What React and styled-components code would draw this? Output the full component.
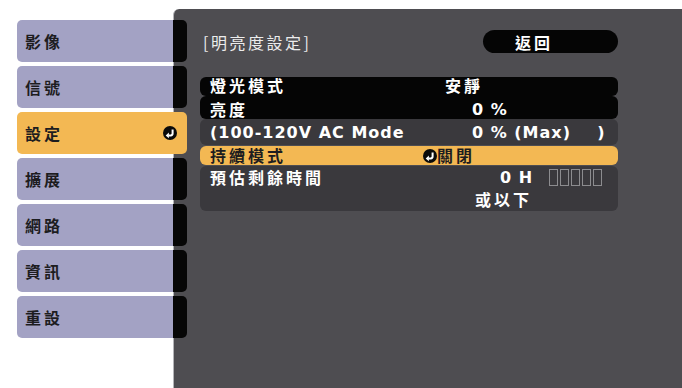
import React from "react";
import styled, { createGlobalStyle } from "styled-components";

const GlobalStyle = createGlobalStyle`
  html, body {
    margin: 0;
    padding: 0;
    background: #ffffff;
  }
  body {
    font-family: "Liberation Sans", "Noto Sans CJK TC", sans-serif;
  }
`;

const Screen = styled.div`
  display: flex;
  width: 682px;
  height: 388px;
  overflow: hidden;
  background: #ffffff;
`;

const Menu = styled.nav`
  position: relative;
  z-index: 1;
  display: flex;
  flex-direction: column;
  gap: 4px;
  flex: 0 0 170px;
  padding: 20px 0 0 17px;
  margin-right: -14px;
`;

const MenuItem = styled.div`
  height: 42px;
  display: flex;
  align-items: center;
  justify-content: space-between;
  padding: 0 10px 0 8px;
  border-radius: 5px;
  background: ${(p) =>
    p.$active
      ? "#f3b853"
      : "linear-gradient(to right, #a3a2c4 0 156px, #060606 156px)"};
  color: #1d1d1f;
  font-family: "Noto Sans CJK TC", sans-serif;
  font-weight: 700;
  font-size: 16px;
  letter-spacing: 3px;
`;

const Panel = styled.section`
  flex: 1;
  margin-top: 9px;
  display: flex;
  flex-direction: column;
  padding: 21px 64px 0 26px;
  background: #4e4d51;
  border-left: 1px solid #b4b4b8;
  border-top-left-radius: 6px;
`;

const Header = styled.div`
  height: 23px;
  display: flex;
  align-items: center;
  justify-content: space-between;
`;

const Title = styled.div`
  padding-left: 3px;
  color: #ececec;
  font-family: "Noto Sans CJK TC", sans-serif;
  font-size: 16px;
  letter-spacing: 2.5px;
`;

const BackButton = styled.div`
  width: 135px;
  height: 23px;
  box-sizing: border-box;
  display: flex;
  align-items: center;
  padding-left: 32px;
  border-radius: 12px;
  background: #050505;
  color: #ffffff;
  font-family: "Noto Sans CJK TC", sans-serif;
  font-weight: 700;
  font-size: 16px;
  letter-spacing: 3px;
`;

const List = styled.div`
  display: flex;
  flex-direction: column;
  margin-top: 24px;
`;

const tones = {
  black: { bg: "#050505", fg: "#ffffff" },
  dim: { bg: "#3a393d", fg: "#ffffff" },
  active: { bg: "#f3b853", fg: "#1d1d1f" },
};

const Row = styled.div`
  box-sizing: border-box;
  height: ${(p) => p.$height}px;
  margin-top: ${(p) => p.$gap || 0}px;
  display: flex;
  flex-direction: column;
  justify-content: ${(p) => (p.$top ? "flex-start" : "center")};
  padding: ${(p) => Math.max(p.$offset || 0, 0)}px 0
    ${(p) => Math.max(-(p.$offset || 0), 0)}px 10px;
  border-radius: 6px;
  background: ${(p) => tones[p.$tone].bg};
  color: ${(p) => tones[p.$tone].fg};
  font-family: "Noto Sans CJK TC", sans-serif;
  font-weight: 700;
  font-size: 16px;
  line-height: 17px;
  letter-spacing: 3px;
  white-space: pre;
`;

const Line = styled.div`
  height: ${(p) => (p.$height ? `${p.$height}px` : "auto")};
  display: flex;
  align-items: center;
`;

const Label = styled.span`
  flex: 0 0 213px;
`;

const Value = styled.span`
  display: flex;
  align-items: center;
  margin-left: ${(p) => p.$indent || 0}px;
`;

const Latin = styled.span`
  font-family: "DejaVu Sans", sans-serif;
  letter-spacing: 1px;
`;

const Gauge = styled.span`
  display: flex;
  gap: 2px;
  margin-left: 16px;
`;

const Cell = styled.span`
  width: 7px;
  height: 15px;
  border: 1px solid #8c8c8f;
`;

function ReturnIcon() {
  return (
    <svg width="14" height="14" viewBox="0 0 14 14" style={{ flex: "0 0 14px" }}>
      <circle cx="7" cy="7" r="7" fill="#0a0a0a" />
      <path
        d="M9.6 3.4 V7.6 Q9.6 9.4 7.8 9.4 H5.4"
        fill="none"
        stroke="#ffffff"
        strokeWidth="2"
      />
      <path d="M2.7 9.4 L5.9 6.5 L5.9 12.3 Z" fill="#ffffff" />
    </svg>
  );
}

const menu = ["影像", "信號", "設定", "擴展", "網路", "資訊", "重設"];

export default function App() {
  return (
    <>
      <GlobalStyle />
      <Screen>
        <Menu>
          {menu.map((name) => (
            <MenuItem key={name} $active={name === "設定"}>
              <span>{name}</span>
              {name === "設定" && <ReturnIcon />}
            </MenuItem>
          ))}
        </Menu>
        <Panel>
          <Header>
            <Title>[明亮度設定]</Title>
            <BackButton>返回</BackButton>
          </Header>
          <List>
            <Row $tone="black" $height={19} $offset={-2}>
              <Line>
                <Label>燈光模式</Label>
                <Value $indent={22}>安靜</Value>
              </Line>
            </Row>
            <Row $tone="black" $height={23} $offset={4}>
              <Line>
                <Label>亮度</Label>
                <Value $indent={49}>
                  <Latin>0 %</Latin>
                </Value>
              </Line>
            </Row>
            <Row $tone="dim" $height={26}>
              <Line>
                <Label>
                  <Latin>(100-120V AC Mode</Latin>
                </Label>
                <Value $indent={49}>
                  <Latin>{"0 % (Max)    )"}</Latin>
                </Value>
              </Line>
            </Row>
            <Row $tone="active" $height={19} $gap={1}>
              <Line>
                <Label>持續模式</Label>
                <Value>
                  <ReturnIcon />
                  關閉
                </Value>
              </Line>
            </Row>
            <Row $tone="dim" $height={45} $gap={1} $top>
              <Line $height={23}>
                <Label>預估剩餘時間</Label>
                <Value $indent={77}>
                  <Latin>0 H</Latin>
                  <Gauge>
                    {[0, 1, 2, 3, 4].map((i) => (
                      <Cell key={i} />
                    ))}
                  </Gauge>
                </Value>
              </Line>
              <Line $height={23}>
                <Label />
                <Value $indent={52}>或以下</Value>
              </Line>
            </Row>
          </List>
        </Panel>
      </Screen>
    </>
  );
}
